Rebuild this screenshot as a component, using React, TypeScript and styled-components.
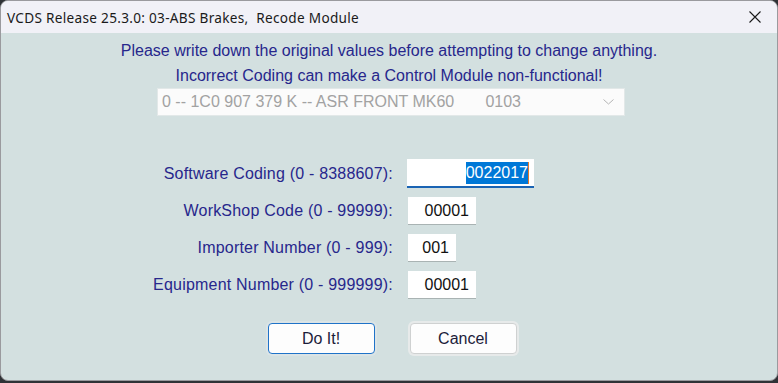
import React from "react";
import styled, { createGlobalStyle } from "styled-components";

const GlobalStyle = createGlobalStyle`
  html, body {
    margin: 0;
    padding: 0;
    background: #2f3236;
  }
  #root {
    width: 778px;
    height: 383px;
  }
`;

const Window = styled.div`
  width: 778px;
  height: 381px;
  box-sizing: border-box;
  border: 1px solid #9a9a9e;
  border-radius: 8px;
  overflow: hidden;
  display: flex;
  flex-direction: column;
  background: #d3e0e0;
`;

const TitleBar = styled.div`
  height: 32px;
  flex: none;
  display: flex;
  align-items: center;
  justify-content: space-between;
  padding: 0 0 0 6px;
  background: #f1f1f7;
  font-family: "Noto Sans", "Open Sans", sans-serif;
  font-size: 13.6px;
  letter-spacing: 0.3px;
  color: #1a1a1a;
`;

const CloseButton = styled.div`
  width: 44px;
  height: 32px;
  display: flex;
  align-items: center;
  justify-content: center;
`;

const Body = styled.div`
  flex: 1;
  display: flex;
  flex-direction: column;
  align-items: center;
  font-family: "Liberation Sans", Arial, sans-serif;
  color: #27278c;
`;

const Warning = styled.p`
  margin: 5px 0 0;
  font-size: 16px;
  line-height: 25px;
  text-align: center;
`;

const ModuleSelect = styled.div`
  margin: 0 0 0 4px;
  width: 468px;
  height: 28px;
  box-sizing: border-box;
  background: #fbfbfb;
  border: 1px solid #e2e8e8;
  display: flex;
  align-items: center;
  justify-content: space-between;
  padding: 0 10px 0 4px;
  font-size: 16px;
  color: #a2a2a2;
  white-space: pre;
`;

const Form = styled.div`
  margin-top: 43px;
  align-self: stretch;
  display: grid;
  grid-template-columns: 392px 1fr;
  column-gap: 14px;
  row-gap: 9px;
  align-items: center;
`;

const Label = styled.div`
  text-align: right;
  font-size: 16px;
  letter-spacing: 0.2px;
`;

const Field = styled.div<{ $width: number; $active?: boolean }>`
  width: ${(p) => p.$width}px;
  height: ${(p) => (p.$active ? 29 : 28)}px;
  box-sizing: border-box;
  background: #fff;
  border-bottom: ${(p) => (p.$active ? "2px solid #1a64b4" : "1px solid #a9b3b3")};
  display: flex;
  align-items: center;
  justify-content: flex-end;
  padding-right: ${(p) => (p.$active ? 5 : 7)}px;
  font-size: 16px;
  color: #111;
  margin-left: ${(p) => (p.$active ? 0 : 1)}px;
`;

const Selected = styled.span`
  background: #0078d7;
  color: #fff;
  padding: 2px 0;
  border-right: 1px solid #e2782a;
`;

const Buttons = styled.div`
  margin-top: 24px;
  display: flex;
  gap: 35px;
  margin-left: 6px;
`;

const Button = styled.button<{ $primary?: boolean }>`
  width: 107px;
  height: 31px;
  box-sizing: border-box;
  background: #fdfdfd;
  border: 1px solid ${(p) => (p.$primary ? "#1f73c8" : "#cfd1d1")};
  border-radius: 4px;
  box-shadow: 0 0 0 2px ${(p) => (p.$primary ? "#dbe4e6" : "#e7eaea")};
  font-family: "Liberation Sans", Arial, sans-serif;
  font-size: 16px;
  color: #1c1c3a;
  padding: 0;
`;

const rows = [
  { label: "WorkShop Code (0 - 99999):", value: "00001", width: 68 },
  { label: "Importer Number (0 - 999):", value: "001", width: 48 },
  { label: "Equipment Number (0 - 999999):", value: "00001", width: 68 },
];

export default function App() {
  return (
    <>
      <GlobalStyle />
      <Window>
        <TitleBar>
          <span>VCDS Release 25.3.0: 03-ABS Brakes,&nbsp; Recode Module</span>
          <CloseButton>
            <svg width="12" height="12" viewBox="0 0 12 12">
              <path d="M0.5 0.5 L11.5 11.5 M11.5 0.5 L0.5 11.5" stroke="#1a1a1a" strokeWidth="1.1" />
            </svg>
          </CloseButton>
        </TitleBar>
        <Body>
          <Warning>
            Please write down the original values before attempting to change anything.
            <br />
            Incorrect Coding can make a Control Module non-functional!
          </Warning>
          <ModuleSelect>
            <span>{"0 -- 1C0 907 379 K -- ASR FRONT MK60       0103"}</span>
            <svg width="11" height="6" viewBox="0 0 11 6">
              <path d="M0.5 0.5 L5.5 5 L10.5 0.5" stroke="#b4b4b4" fill="none" strokeWidth="1" />
            </svg>
          </ModuleSelect>
          <Form>
            <Label>Software Coding (0 - 8388607):</Label>
            <Field $width={127} $active>
              <Selected>0022017</Selected>
            </Field>
            {rows.map((r) => (
              <React.Fragment key={r.label}>
                <Label>{r.label}</Label>
                <Field $width={r.width}>{r.value}</Field>
              </React.Fragment>
            ))}
          </Form>
          <Buttons>
            <Button $primary>Do It!</Button>
            <Button>Cancel</Button>
          </Buttons>
        </Body>
      </Window>
    </>
  );
}
